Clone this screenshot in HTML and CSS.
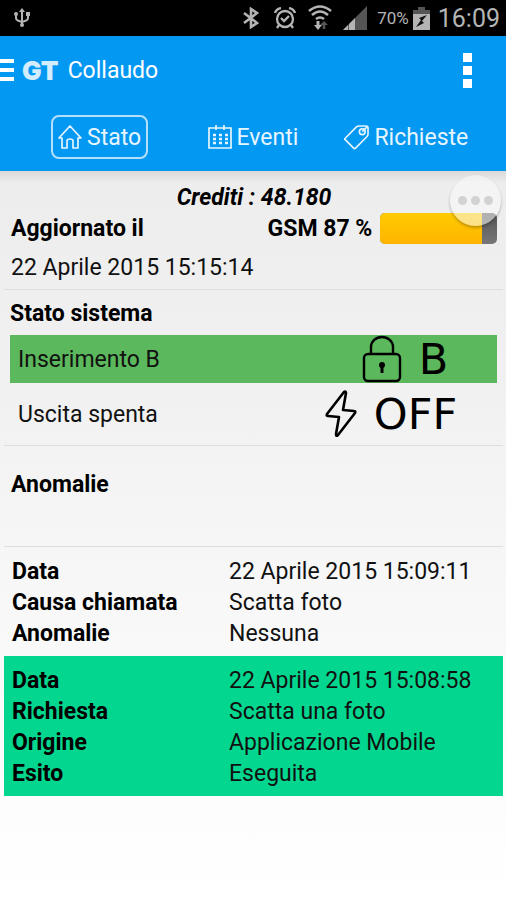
FILE: index.html
```html
<!DOCTYPE html>
<html lang="it">
<head>
    <meta charset="UTF-8">
    <meta name="viewport" content="width=device-width, initial-scale=1.0">
    <title>Collaudo</title>
    <link rel="stylesheet" href="styles.css">
</head>
<body>

    <div class="status-bar">
        <svg class="usb" width="16" height="20" viewBox="0 0 16 20" fill="none" stroke="#b4b4b4" stroke-width="2">
            <path d="M8 3v14M2 6v4q0 2 3 3l3 1 3-1q3-1 3-3V6"/>
            <path d="M8 0l3 4H5z" fill="#b4b4b4" stroke="none"/>
            <circle cx="2" cy="6" r="2" fill="#b4b4b4" stroke="none"/>
            <rect x="12" y="4" width="4" height="4" fill="#b4b4b4" stroke="none"/>
            <circle cx="8" cy="17" r="2" fill="#b4b4b4" stroke="none"/>
        </svg>
        <div class="status-icons">
            <svg width="16" height="22" viewBox="0 0 16 22" fill="none" stroke="#b4b4b4" stroke-width="2.6">
                <path d="M1 6l13 10-6 4V2l6 4L1 16"/>
            </svg>
            <svg class="alarm" width="22" height="22" viewBox="0 0 22 22" fill="none" stroke="#b4b4b4" stroke-width="2.3">
                <circle cx="11" cy="12" r="8"/>
                <path d="M7 11l3 3 5-5M1 6q1-4 6-5M21 6q-1-4-6-5M5 18l-2 3M17 18l2 3"/>
            </svg>
            <svg class="wifi" width="24" height="26" viewBox="0 0 24 26" fill="none" stroke="#b4b4b4" stroke-width="2.6">
                <path d="M1 6q11-9 22 0M4 10q8-7 16 0M8 14q4-3 8 0"/>
                <path d="M10 16v6" stroke-width="3"/>
                <path d="M6 20h8l-4 5z" fill="#b4b4b4" stroke="none"/>
                <path d="M16 24v-6" stroke="#555"/>
                <path d="M12 20l4-4 4 4z" fill="#555" stroke="none"/>
            </svg>
            <svg class="signal" width="24" height="24" viewBox="0 0 24 24">
                <path d="M0 24L24 0v24z" fill="#555"/>
                <path d="M0 24l5-5v5zM6 24v-6l6-6v12z" fill="#b4b4b4"/>
            </svg>
            <span class="percent">70%</span>
            <svg class="battery" width="17" height="23" viewBox="0 0 17 23">
                <path d="M5 0h7v3h5v4H0V3h5z" fill="#555"/>
                <path d="M0 7h17v16H0z" fill="#b4b4b4"/>
                <path d="M14 8l-8 3 2 2-5 7 8-4-2-2z" fill="#111"/>
            </svg>
            <span class="clock">16:09</span>
        </div>
    </div>

    <header class="header">
        <div class="title-bar">
            <button class="menu-btn" aria-label="Menu">
                <span></span><span></span><span></span>
            </button>
            <span class="logo">GT</span>
            <h1>Collaudo</h1>
            <button class="more-btn" aria-label="Altro">
                <span></span><span></span><span></span>
            </button>
        </div>
        <nav class="tabs">
            <a href="#stato" class="tab active">
                <svg width="24" height="24" viewBox="0 0 24 24" fill="none" stroke="currentColor" stroke-width="1.7" stroke-linejoin="round">
                    <path d="M1 13L12 1l11 12h-3v10h-5v-7q0-2-3-2t-3 2v7H4V13z"/>
                </svg>
                Stato
            </a>
            <a href="#eventi" class="tab">
                <svg width="24" height="24" viewBox="0 0 24 24" fill="none" stroke="currentColor" stroke-width="1.7">
                    <path d="M1 3h22v20H1zM8 0v5M16 0v5"/>
                    <path d="M5 10h3M11 10h3M17 10h3M5 14h3M11 14h3M17 14h3M5 18h3M11 18h3M17 18h3" stroke-width="2.4"/>
                </svg>
                Eventi
            </a>
            <a href="#richieste" class="tab">
                <svg width="25" height="25" viewBox="0 0 26 26" fill="none" stroke="currentColor" stroke-width="1.7" stroke-linejoin="round">
                    <path d="M1 14L13 2q1-1 3-1h7q2 0 2 2v6q0 2-1 3L12 24q-1 1-2 0L1 15q-1 0 0-1z"/>
                    <circle cx="19" cy="7" r="3"/>
                    <path d="M19 7l5-5"/>
                </svg>
                Richieste
            </a>
        </nav>
    </header>

    <main class="content">
        <button class="float-btn" aria-label="Opzioni">
            <span></span><span></span><span></span>
        </button>

        <section class="update">
            <p class="credits">Crediti : 48.180</p>
            <div class="update-row">
                <h2>Aggiornato il</h2>
                <span class="gsm">GSM 87 %</span>
                <div class="gsm-bar">
                    <div class="gsm-fill" style="width: 87%"></div>
                </div>
            </div>
            <p class="date">22 Aprile 2015 15:15:14</p>
        </section>

        <section class="system">
            <h2>Stato sistema</h2>
            <div class="state on">
                <span class="state-name">Inserimento B</span>
                <span class="state-value">
                    <svg width="40" height="48" viewBox="0 0 40 48" fill="none" stroke="#000" stroke-width="2.4">
                        <rect x="2" y="19" width="36" height="27" rx="4"/>
                        <path d="M9 19v-7a11 10 0 0 1 22 0v7"/>
                        <path d="M20 30v8" stroke-width="3"/>
                        <circle cx="20" cy="30" r="3" fill="#000" stroke="none"/>
                    </svg>
                    B
                </span>
            </div>
            <div class="state">
                <span class="state-name">Uscita spenta</span>
                <span class="state-value">
                    <svg width="32" height="48" viewBox="0 0 32 48" fill="none" stroke="#000" stroke-width="2.6" stroke-linejoin="round">
                        <path d="M19 2q2-1 2 1l-3 17 11 1q2 0 1 2L13 45q-2 2-2-1l3-17-11-1q-2 0-1-2z"/>
                    </svg>
                    OFF
                </span>
            </div>
        </section>

        <section class="faults">
            <h2>Anomalie</h2>
        </section>

        <table class="log">
            <tr><th scope="row">Data</th><td>22 Aprile 2015 15:09:11</td></tr>
            <tr><th scope="row">Causa chiamata</th><td>Scatta foto</td></tr>
            <tr><th scope="row">Anomalie</th><td>Nessuna</td></tr>
        </table>
        <table class="log done">
            <tr><th scope="row">Data</th><td>22 Aprile 2015 15:08:58</td></tr>
            <tr><th scope="row">Richiesta</th><td>Scatta una foto</td></tr>
            <tr><th scope="row">Origine</th><td>Applicazione Mobile</td></tr>
            <tr><th scope="row">Esito</th><td>Eseguita</td></tr>
        </table>
    </main>

</body>
</html>
```

FILE: styles.css
```css
* {
    box-sizing: border-box;
}

body {
    margin: 0;
    min-height: 100vh;
    display: flex;
    flex-direction: column;
    font-family: Roboto, sans-serif;
    font-size: 23px;
    line-height: 31px;
    color: #111;
}

h1, h2, p {
    margin: 0;
    font-size: 23px;
}

h2 {
    font-weight: 700;
    color: #000;
}

button {
    padding: 0;
    border: none;
    background: none;
    cursor: pointer;
}

.status-bar {
    display: flex;
    justify-content: space-between;
    align-items: center;
    height: 36px;
    padding: 0 6px 0 14px;
    background: #000;
    color: #b4b4b4;
}

.status-icons {
    display: flex;
    align-items: center;
}

.alarm {
    margin-left: 15px;
}

.wifi {
    margin-left: 12px;
}

.signal {
    margin-left: 11px;
}

.percent {
    margin-left: 10px;
    font-size: 17px;
}

.battery {
    margin-left: 4px;
}

.clock {
    margin-left: 8px;
    font-size: 25px;
}

.header {
    background: #0398f2;
    color: #fff;
}

.title-bar {
    display: flex;
    align-items: center;
    height: 68px;
    padding-right: 34px;
}

.menu-btn {
    display: flex;
    flex-direction: column;
    gap: 5px;
    width: 14px;
}

.menu-btn span {
    height: 4px;
    background: #fff;
}

.logo {
    margin: 0 9px 0 8px;
    font-family: Inter, sans-serif;
    font-size: 26px;
    font-weight: 900;
    color: #d3edff;
}

.title-bar h1 {
    flex: 1;
    font-weight: 400;
}

.more-btn {
    display: flex;
    flex-direction: column;
    gap: 4px;
}

.more-btn span {
    width: 9px;
    height: 9px;
    background: #fff;
}

.tabs {
    display: grid;
    grid-template-columns: repeat(3, 1fr);
    justify-items: center;
    padding: 11px 23px 12px;
}

.tab {
    display: flex;
    align-items: center;
    gap: 5px;
    height: 44px;
    padding: 0 5px;
    border: 2px solid transparent;
    border-radius: 8px;
    color: #e6f5ff;
    text-decoration: none;
}

.tab.active {
    border-color: #b5dffb;
}

.content {
    position: relative;
    flex: 1;
    padding: 11px 3px 0 4px;
    background: linear-gradient(#d9d9d9, #ededed 12px, #f1f1f1 30%, #f8f8f8 60%, #fff);
}

.float-btn {
    position: absolute;
    top: 4px;
    right: 5px;
    display: flex;
    justify-content: center;
    align-items: center;
    gap: 4px;
    width: 51px;
    height: 51px;
    border-radius: 50%;
    background: rgba(250, 250, 250, 0.55);
    box-shadow: 0 2px 3px rgba(0, 0, 0, 0.25);
}

.float-btn span {
    width: 9px;
    height: 9px;
    border-radius: 50%;
    background: #d2d2d2;
}

.update {
    padding: 0 6px 6px 7px;
    border-bottom: 1px solid #dedede;
}

.credits {
    text-align: center;
    font-style: italic;
    font-weight: 700;
    color: #000;
}

.update-row {
    display: flex;
    align-items: center;
}

.update-row h2 {
    flex: 1;
}

.gsm {
    font-weight: 700;
    color: #000;
}

.gsm-bar {
    width: 24%;
    height: 31px;
    margin-left: 8px;
    border-radius: 5px;
    overflow: hidden;
    background: linear-gradient(#555, #777);
}

.gsm-fill {
    height: 100%;
    background: linear-gradient(#ffcb00, #ffb400);
}

.date {
    padding-top: 8px;
}

.system {
    padding: 8px 6px 7px;
    border-bottom: 1px solid #dedede;
}

.state {
    display: flex;
    align-items: center;
    height: 48px;
    margin-top: 7px;
    padding: 0 8px;
}

.state.on {
    margin-top: 6px;
    background: #5cb85c;
}

.state-name {
    flex: 1;
}

.state-value {
    display: flex;
    justify-content: center;
    align-items: center;
    gap: 17px;
    width: 196px;
    font-family: "DejaVu Sans", sans-serif;
    font-size: 43px;
    color: #000;
}

.state.on .state-value {
    width: 168px;
}

.faults {
    padding: 23px 7px 46px;
    border-bottom: 1px solid #dedede;
}

.log {
    width: 100%;
    padding: 9px 8px 7px;
    border-spacing: 0;
}

.log th {
    width: 217px;
    padding: 0;
    text-align: left;
    font-weight: 700;
    color: #000;
}

.log td {
    padding: 0;
}

.log.done {
    background: #03d78f;
}
```
